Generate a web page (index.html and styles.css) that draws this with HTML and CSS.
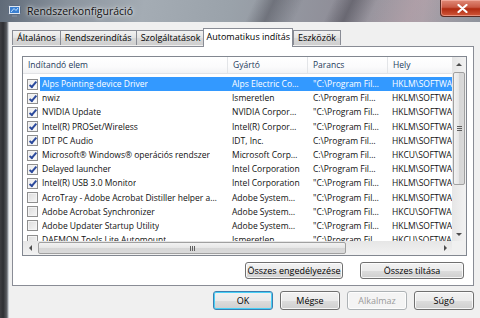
FILE: index.html
```html
<!DOCTYPE html>
<html lang="hu">
<head>
  <meta charset="UTF-8" />
  <title>Rendszerkonfiguráció</title>
  <link rel="stylesheet" href="styles.css">
</head>
<body>
  <div class="window">
    <div class="titlebar">
      <svg class="app-icon" width="13" height="13" viewBox="0 0 13 13">
        <rect x="0.5" y="0.5" width="12" height="9" rx="1" fill="#dfe6ef" stroke="#5b6b80"/>
        <rect x="2" y="2" width="9" height="6" fill="#3a7fd0"/>
        <path d="M3 7 L6 3.5 L8 5.5 L10 3" stroke="#bfe0ff" stroke-width="1" fill="none"/>
        <rect x="4" y="10" width="5" height="2" fill="#7a8594"/>
      </svg>
      <span class="title">Rendszerkonfiguráció</span>
      <div class="close">
        <svg width="11" height="9" viewBox="0 0 11 9">
          <path d="M1.5 1 L9.5 8 M9.5 1 L1.5 8" stroke="#fff" stroke-width="2.2" stroke-linecap="round"/>
        </svg>
      </div>
    </div>
    <div class="frame">
      <div class="frame-left"></div>
      <div class="client">
        <div class="tabs">
          <div class="tab">Általános</div>
          <div class="tab">Rendszerindítás</div>
          <div class="tab">Szolgáltatások</div>
          <div class="tab active">Automatikus indítás</div>
          <div class="tab">Eszközök</div>
        </div>
        <div class="panel">
          <div class="listview">
            <div class="list-main">
              <div class="list-area">
                <div class="row header">
                  <div class="cell">Indítandó elem</div>
                  <div class="cell">Gyártó</div>
                  <div class="cell">Parancs</div>
                  <div class="cell">Hely</div>
                </div>
                <div class="row selected">
                  <div class="cell first"><span class="check on"></span><span class="name">Alps Pointing-device Driver</span></div>
                  <div class="cell">Alps Electric Co…</div>
                  <div class="cell">"C:\Program Fil…</div>
                  <div class="cell">HKLM\SOFTWARE</div>
                </div>
                <div class="row">
                  <div class="cell first"><span class="check on"></span><span class="name">nwiz</span></div>
                  <div class="cell">Ismeretlen</div>
                  <div class="cell">C:\Program Fil…</div>
                  <div class="cell">HKLM\SOFTWARE</div>
                </div>
                <div class="row">
                  <div class="cell first"><span class="check on"></span><span class="name">NVIDIA Update</span></div>
                  <div class="cell">NVIDIA Corpor…</div>
                  <div class="cell">"C:\Program Fil…</div>
                  <div class="cell">HKLM\SOFTWARE</div>
                </div>
                <div class="row">
                  <div class="cell first"><span class="check on"></span><span class="name">Intel(R) PROSet/Wireless</span></div>
                  <div class="cell">Intel(R) Corpor…</div>
                  <div class="cell">"C:\Program Fil…</div>
                  <div class="cell">HKLM\SOFTWARE</div>
                </div>
                <div class="row">
                  <div class="cell first"><span class="check on"></span><span class="name">IDT PC Audio</span></div>
                  <div class="cell">IDT, Inc.</div>
                  <div class="cell">C:\Program Fil…</div>
                  <div class="cell">HKLM\SOFTWARE</div>
                </div>
                <div class="row">
                  <div class="cell first"><span class="check on"></span><span class="name">Microsoft® Windows® operációs rendszer</span></div>
                  <div class="cell">Microsoft Corp…</div>
                  <div class="cell">C:\Program Fil…</div>
                  <div class="cell">HKCU\SOFTWARE</div>
                </div>
                <div class="row">
                  <div class="cell first"><span class="check on"></span><span class="name">Delayed launcher</span></div>
                  <div class="cell">Intel Corporation</div>
                  <div class="cell">C:\Program Fil…</div>
                  <div class="cell">HKLM\SOFTWARE</div>
                </div>
                <div class="row">
                  <div class="cell first"><span class="check on"></span><span class="name">Intel(R) USB 3.0 Monitor</span></div>
                  <div class="cell">Intel Corporation</div>
                  <div class="cell">"C:\Program Fil…</div>
                  <div class="cell">HKLM\SOFTWARE</div>
                </div>
                <div class="row">
                  <div class="cell first"><span class="check"></span><span class="name">AcroTray - Adobe Acrobat Distiller helper a…</span></div>
                  <div class="cell">Adobe System…</div>
                  <div class="cell">"C:\Program Fil…</div>
                  <div class="cell">HKLM\SOFTWARE</div>
                </div>
                <div class="row">
                  <div class="cell first"><span class="check"></span><span class="name">Adobe Acrobat Synchronizer</span></div>
                  <div class="cell">Adobe System…</div>
                  <div class="cell">"C:\Program Fil…</div>
                  <div class="cell">HKCU\SOFTWARE</div>
                </div>
                <div class="row">
                  <div class="cell first"><span class="check"></span><span class="name">Adobe Updater Startup Utility</span></div>
                  <div class="cell">Adobe System…</div>
                  <div class="cell">"C:\Program Fil…</div>
                  <div class="cell">HKLM\SOFTWARE</div>
                </div>
                <div class="row">
                  <div class="cell first"><span class="check"></span><span class="name">DAEMON Tools Lite Automount</span></div>
                  <div class="cell">Ismeretlen</div>
                  <div class="cell">"C:\Program Fil…</div>
                  <div class="cell">HKCU\SOFTWARE</div>
                </div>
              </div>
              <div class="vscroll">
                <div class="sb-btn"><span class="arr up"></span></div>
                <div class="sb-track">
                  <div class="sb-thumb v"><span class="grip v"></span></div>
                </div>
                <div class="sb-btn"><span class="arr down"></span></div>
              </div>
            </div>
            <div class="hscroll-row">
              <div class="hscroll">
                <div class="sb-btn"><span class="arr left"></span></div>
                <div class="sb-track h">
                  <div class="sb-thumb h"><span class="grip h"></span></div>
                </div>
                <div class="sb-btn"><span class="arr right"></span></div>
              </div>
              <div class="corner"></div>
            </div>
          </div>
          <div class="panel-buttons">
            <button class="btn wide">Összes engedélyezése</button>
            <button class="btn wider">Összes tiltása</button>
          </div>
        </div>
        <div class="dialog-buttons">
          <button class="btn default">OK</button>
          <button class="btn">Mégse</button>
          <button class="btn" disabled>Alkalmaz</button>
          <button class="btn">Súgó</button>
        </div>
      </div>
    </div>
  </div>
</body>
</html>
```

FILE: styles.css
```css
body {
  margin: 0;
  width: 480px;
  height: 318px;
  overflow: hidden;
  font-family: 'Open Sans', 'DejaVu Sans', sans-serif;
  font-size: 8.5px;
  color: #000;
}

.window {
  width: 480px;
  height: 318px;
  display: flex;
  flex-direction: column;
}

/* glass title bar */
.titlebar {
  height: 22px;
  flex: none;
  display: flex;
  align-items: center;
  padding-left: 8px;
  position: relative;
  background:
    linear-gradient(115deg, transparent 0 52%, rgba(40, 40, 50, 0.35) 56%, transparent 62%, transparent 68%, rgba(30, 30, 40, 0.35) 72%, transparent 77%, rgba(200, 160, 170, 0.25) 85%, transparent 92%),
    linear-gradient(100deg, #5f6a78 0%, #8b949e 14%, #a4acb4 30%, #9aa2aa 48%, #8f8e98 70%, #a8a0a8 88%, #8e939c 100%);
}

.app-icon {
  flex: none;
  margin-top: 1px;
}

.title {
  margin-left: 6px;
  font-size: 10.5px;
  color: #111;
  text-shadow: 0 0 6px rgba(255, 255, 255, 0.8), 0 0 3px rgba(255, 255, 255, 0.8);
}

.close {
  position: absolute;
  top: 0;
  right: -4px;
  width: 42px;
  height: 16px;
  border: 1px solid #5a2a22;
  border-top: none;
  border-radius: 0 0 4px 4px;
  background: linear-gradient(#e08a78 0%, #c95a45 45%, #b02a10 55%, #d0583a 100%);
  box-shadow: inset 0 0 0 1px rgba(255, 200, 190, 0.5);
  display: flex;
  align-items: center;
  justify-content: center;
}

.frame {
  flex: 1;
  display: flex;
  min-height: 0;
}

.frame-left {
  width: 8px;
  flex: none;
  background: linear-gradient(90deg, #3e3e42 0%, #2e2f33 40%, #55575c 80%, #9ea2a8 100%);
}

.client {
  flex: 1;
  min-width: 0;
  background: #f0f0f0;
  border-left: 1px solid #c8ccd2;
  padding: 6px 6px 0 3px;
  display: flex;
  flex-direction: column;
}

/* tabs */
.tabs {
  display: flex;
  align-items: flex-end;
  height: 18px;
  position: relative;
  z-index: 1;
}

.tab {
  height: 15px;
  line-height: 14px;
  padding: 0 4px;
  border: 1px solid #898c95;
  border-bottom: none;
  margin-right: -1px;
  background: linear-gradient(#f2f2f2, #e3e3e3 50%, #d9d9d9 51%, #cfcfcf);
  box-sizing: border-box;
  font-size: 9px;
  white-space: nowrap;
  margin-bottom: 1px;
}

.tab.active {
  height: 19px;
  line-height: 15px;
  background: #fff;
  margin: 0 -1px -1px -1px;
  padding: 0 2px;
  position: relative;
  z-index: 2;
}

.tab.active + .tab {
  margin-left: 1px;
}

/* tab panel */
.panel {
  height: 240px;
  flex: none;
  box-sizing: border-box;
  border: 1px solid #898c95;
  background: #fff;
  padding: 9px 6px 0 9px;
  display: flex;
  flex-direction: column;
}

.listview {
  height: 200px;
  flex: none;
  border: 1px solid #828790;
  box-sizing: border-box;
  display: flex;
  flex-direction: column;
}

.list-main {
  flex: 1;
  display: flex;
  min-height: 0;
}

.list-area {
  flex: 1;
  min-width: 0;
  overflow: hidden;
}

.row {
  display: grid;
  grid-template-columns: 205px 80px 80px 80px;
  height: 14.2px;
  line-height: 14px;
  white-space: nowrap;
}

.row.header {
  height: 16px;
  line-height: 16px;
  margin-bottom: 3px;
  background: linear-gradient(#ffffff, #fbfbfc 60%, #f2f3f5);
  border-bottom: 1px solid #e2e3e6;
}

.row.header .cell {
  padding-left: 5px;
  border-right: 1px solid #e3e5e8;
  color: #1e395b;
}

.row .cell {
  overflow: hidden;
  padding-left: 4px;
  color: #111;
}

.row .cell:nth-child(3) {
  padding-left: 5px;
}

.row .cell.first {
  display: flex;
  align-items: center;
  padding-left: 4px;
}

.row.selected .cell {
  background: #3399ff;
  color: #fff;
}

.row.selected .cell.first {
  background: linear-gradient(90deg, transparent 17px, #3399ff 17px);
}

.name {
  margin-left: 4px;
  overflow: hidden;
}

.check {
  flex: none;
  width: 9px;
  height: 9px;
  border: 1px solid #8f8f8f;
  background: linear-gradient(135deg, #dcdcdc, #f6f6f6);
  box-shadow: inset 0 0 0 1px #f4f4f4;
  position: relative;
}

.check.on {
  background: linear-gradient(135deg, #e8e8e8, #fdfdfd);
}

.check.on::after {
  content: "";
  position: absolute;
  left: 3px;
  top: 0;
  width: 2px;
  height: 6px;
  border: solid #2c4a9c;
  border-width: 0 2px 2px 0;
  transform: rotate(40deg);
}

/* scrollbars */
.vscroll {
  width: 14px;
  flex: none;
  display: flex;
  flex-direction: column;
  background: linear-gradient(90deg, #e6e6e6, #f2f2f2);
}

.hscroll-row {
  height: 14px;
  flex: none;
  display: flex;
}

.hscroll {
  flex: 1;
  display: flex;
  background: linear-gradient(#e6e6e6, #f2f2f2);
}

.corner {
  width: 14px;
  background: #f0f0f0;
}

.sb-btn {
  width: 14px;
  height: 14px;
  flex: none;
  display: flex;
  align-items: center;
  justify-content: center;
}

.sb-track {
  flex: 1;
  display: flex;
  flex-direction: column;
  padding: 1px 0;
}

.sb-track.h {
  flex-direction: row;
  padding: 0 1px;
}

.sb-thumb {
  border: 1px solid #a0a0a0;
  border-radius: 2px;
  box-sizing: border-box;
  display: flex;
  align-items: center;
  justify-content: center;
}

.sb-thumb.v {
  height: 113px;
  margin: 0 1px;
  background: linear-gradient(90deg, #f2f2f2, #e6e6e6 50%, #d6d6d6 51%, #dadada);
}

.sb-thumb.h {
  width: 308px;
  margin: 1px 0;
  background: linear-gradient(#f2f2f2, #e6e6e6 50%, #d6d6d6 51%, #dadada);
}

.grip.v {
  width: 5px;
  height: 5px;
  background: repeating-linear-gradient(#5f5f5f 0 1px, transparent 1px 2px);
}

.grip.h {
  width: 5px;
  height: 5px;
  background: repeating-linear-gradient(90deg, #5f5f5f 0 1px, transparent 1px 2px);
}

.arr {
  width: 0;
  height: 0;
  border: 3px solid transparent;
}

.arr.up { border-bottom-color: #4d4d4d; border-top-width: 0; }
.arr.down { border-top-color: #4d4d4d; border-bottom-width: 0; }
.arr.left { border-right-color: #4d4d4d; border-left-width: 0; }
.arr.right { border-left-color: #4d4d4d; border-right-width: 0; }

/* buttons */
.btn {
  font-family: inherit;
  font-size: 9px;
  height: 17px;
  padding: 0;
  border: 1px solid #707070;
  border-radius: 3px;
  background: linear-gradient(#f2f2f2, #ebebeb 50%, #dddddd 51%, #cfcfcf);
  box-shadow: inset 0 0 0 1px rgba(255, 255, 255, 0.8);
  color: #000;
}

.btn:disabled {
  color: #9a9a9a;
  border-color: #adb2b5;
  background: #f4f4f4;
}

.panel-buttons {
  display: flex;
  justify-content: flex-end;
  gap: 17px;
  margin-top: 6px;
  padding-right: 3px;
}

.btn.wide { width: 98px; }
.btn.wider { width: 104px; }

.dialog-buttons {
  display: flex;
  justify-content: flex-end;
  gap: 7px;
  margin-top: 5px;
}

.dialog-buttons .btn {
  width: 60px;
  height: 19px;
}

.btn.default {
  border-color: #3c7fb1;
  box-shadow: inset 0 0 0 1px #48d0f7;
}
```
